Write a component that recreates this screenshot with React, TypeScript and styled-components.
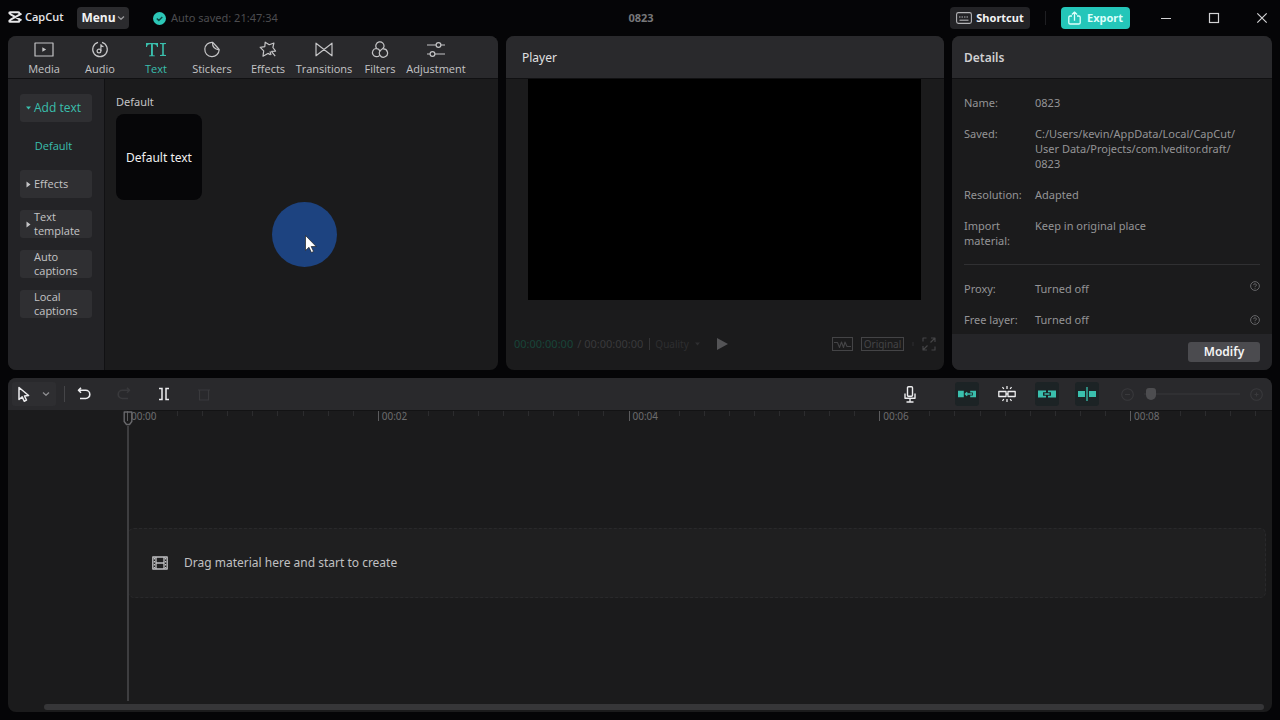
import React from "react";
import styled, { createGlobalStyle } from "styled-components";

const teal = "#3abfad";

const GlobalStyle = createGlobalStyle`
  * { box-sizing: border-box; }
  body {
    margin: 0;
    background: #050507;
    color: #c4c4c6;
    font: 12px/16px "Noto Sans", "Open Sans", sans-serif;
  }
  button {
    font: inherit;
    color: inherit;
    background: none;
    border: 0;
    padding: 0;
    display: flex;
    align-items: center;
    justify-content: center;
  }
  svg { display: block; flex: none; }
`;

const Window = styled.div`
  min-height: 100vh;
  display: flex;
  flex-direction: column;
  position: relative;
`;

/* Title bar */
const TitleBar = styled.header`
  height: 36px;
  display: grid;
  grid-template-columns: 1fr auto 1fr;
  align-items: center;
  padding: 0 6px 0 8px;
`;
const TitleLeft = styled.div`
  display: flex;
  align-items: center;
`;
const TitleRight = styled.div`
  display: flex;
  align-items: center;
  justify-content: flex-end;
`;
const Logo = styled.div`
  display: flex;
  align-items: center;
  gap: 3px;
  width: 69px;
  padding-bottom: 2px;
  color: #e6e6e8;
  font: 600 11px/16px "Open Sans", sans-serif;
`;
const MenuButton = styled.button`
  && {
    width: 52px;
    height: 22px;
    border-radius: 4px;
    background: #2b2b2e;
    color: #f2f2f3;
    font: 700 12px/16px "Open Sans", sans-serif;
    gap: 1px;
  }
  svg { color: #98989b; }
`;
const SavedNote = styled.div`
  display: flex;
  align-items: center;
  gap: 5px;
  margin-left: 24px;
  color: #4c4c4f;
  font-size: 11px;
`;
const ProjectTitle = styled.h1`
  margin: 0;
  color: #77777a;
  font-size: 11px;
  line-height: 16px;
`;
const ShortcutButton = styled.button`
  && {
    height: 22px;
    width: 80px;
    gap: 4px;
    border-radius: 4px;
    background: #232326;
    color: #f2f2f3;
    font-size: 11px;
    font-weight: 700;
  }
`;
const ExportButton = styled(ShortcutButton)`
  && {
    width: 69px;
    gap: 6px;
    background: #24c6b9;
    color: #dcfffb;
  }
`;
const BarDivider = styled.span`
  width: 1px;
  height: 14px;
  margin: 0 15px;
  background: #1f1f22;
`;
const WindowButtons = styled.div`
  display: flex;
  gap: 24px;
  margin-left: 24px;
  color: #d2d2d4;
  button { width: 24px; height: 24px; }
`;

/* Panels */
const Workspace = styled.main`
  flex: 1;
  display: grid;
  grid-template-rows: 1fr 1fr;
  gap: 8px;
  padding: 0 8px 8px;
`;
const TopRow = styled.div`
  display: grid;
  grid-template-columns: minmax(0, 490fr) minmax(0, 438fr) 320px;
  gap: 8px;
`;
const Panel = styled.section`
  display: flex;
  flex-direction: column;
  min-width: 0;
  background: #1b1b1c;
  border-radius: 8px;
  overflow: hidden;
`;
const PanelHead = styled.div`
  height: 43px;
  flex: none;
  display: flex;
  align-items: center;
  background: #29292c;
  border-bottom: 1px solid #101012;
`;
const PanelTitle = styled.h2<{ $strong?: boolean }>`
  margin: 0;
  padding: 2px ${(p) => (p.$strong ? 12 : 16)}px 0;
  color: ${(p) => (p.$strong ? "#d0d0d2" : "#e0e0e2")};
  font-size: 12px;
  line-height: 16px;
  font-weight: ${(p) => (p.$strong ? 600 : 400)};
`;

/* Library */
const Tabs = styled.nav`
  display: flex;
  padding-left: 8px;
`;
const Tab = styled.button<{ $active?: boolean }>`
  && {
    width: 56px;
    height: 42px;
    flex-direction: column;
    gap: 3px;
    padding-top: 4px;
    color: ${(p) => (p.$active ? teal : "#c4c4c6")};
    font: 11px/16px "Open Sans", sans-serif;
  }
`;
const LibraryBody = styled.div`
  flex: 1;
  display: flex;
`;
const SideList = styled.div`
  width: 97px;
  display: flex;
  flex-direction: column;
  gap: 12px;
  padding: 15px 12px;
  background: #232326;
  border-right: 1px solid #111113;
`;
const SideButton = styled.button<{ $active?: boolean }>`
  && {
    width: 72px;
    height: 28px;
    justify-content: flex-start;
    border-radius: 3px;
    background: #2f2f32;
    color: ${(p) => (p.$active ? teal : "#c4c4c6")};
    font: ${(p) => (p.$active ? 12 : 11)}px/14px "Open Sans", sans-serif;
    text-align: left;
  }
`;
const Marker = styled.span`
  width: 14px;
  flex: none;
  display: flex;
  justify-content: center;
  padding-left: 2px;
`;
const SubButton = styled.button`
  && {
    width: 67px;
    height: 24px;
    color: ${teal};
    font: 11px/16px "Open Sans", sans-serif;
  }
`;
const Assets = styled.div`
  flex: 1;
  padding: 15px 11px;
`;
const AssetHeading = styled.h3`
  margin: 0 0 4px;
  font-size: 11px;
  line-height: 16px;
  font-weight: 400;
`;
const AssetCard = styled.button`
  && {
    width: 86px;
    height: 86px;
    padding-top: 2px;
    border-radius: 8px;
    background: #060608;
    color: #f0f0f1;
  }
`;

/* Player */
const Stage = styled.div`
  margin: 0 23px 0 22px;
  aspect-ratio: 16 / 9;
  background: #000;
`;
const PlayerBar = styled.div`
  height: 53px;
  margin-top: auto;
  display: flex;
  align-items: center;
  padding: 0 8px;
  color: #39393b;
  font-size: 11px;
  button { color: #444446; }
`;
const TimeNow = styled.span`
  color: #184439;
`;
const TimeTotal = styled.span`
  margin-left: 4px;
`;
const Quality = styled.button`
  && {
    gap: 6px;
    margin: 0 17px 0 6px;
    padding-left: 5px;
    border-left: 1px solid #343436;
    color: #2e2e30;
    font-size: 10px;
    line-height: 12px;
  }
`;
const PlayerTools = styled.div`
  display: flex;
  align-items: center;
  gap: 8px;
  margin-left: auto;
`;
const RatioButton = styled.button`
  && {
    width: 43px;
    height: 14px;
    border: 1px solid #444446;
    font-size: 10px;
    line-height: 12px;
  }
`;
const Dot = styled.span`
  width: 2px;
  height: 4px;
  background: #242426;
`;

/* Details */
const Facts = styled.dl`
  margin: 0;
  padding: 16px 12px 0;
  display: grid;
  grid-template-columns: 63px 1fr auto;
  gap: 16px 8px;
  color: #949496;
  font-size: 11px;
  line-height: 15px;
  dt, dd { margin: 0; }
  dd:not(:has(+ button)) { grid-column: 2 / 4; }
`;
const HelpButton = styled.button<{ $top?: boolean }>`
  && {
    align-self: ${(p) => (p.$top ? "start" : "center")};
    color: #6e6e70;
  }
`;
const Rule = styled.hr`
  width: 296px;
  height: 1px;
  margin: 0;
  border: 0;
  background: #303032;
  grid-column: 1 / 4;
`;
const DetailsFoot = styled.div`
  height: 36px;
  margin-top: auto;
  display: flex;
  align-items: center;
  justify-content: flex-end;
  padding: 0 12px;
  background: #252528;
`;
const ModifyButton = styled.button`
  && {
    width: 72px;
    height: 20px;
    border-radius: 3px;
    background: #4b4b4f;
    color: #f4f4f5;
    font-size: 12px;
    font-weight: 600;
  }
`;

/* Timeline */
const Timeline = styled(Panel)`
  position: relative;
`;
const ToolRow = styled.div`
  height: 32px;
  flex: none;
  display: flex;
  align-items: center;
  gap: 16px;
  padding: 0 4px;
  background: #29292c;
  color: #ececee;
`;
const SelectGroup = styled.div`
  display: flex;
  height: 24px;
  background: #2e2e31;
  border-radius: 3px;
`;
const ToolButton = styled.button<{ $on?: boolean; $dim?: boolean }>`
  && {
    width: 24px;
    height: 24px;
    border-radius: 3px;
    background: ${(p) => (p.$on ? "#1c2325" : "transparent")};
    color: ${(p) => (p.$on ? teal : p.$dim ? "#39393c" : "#ececee")};
  }
`;
const SelectOptions = styled(ToolButton)`
  && {
    width: 20px;
    color: #8c8c8f;
  }
`;
const ToolDivider = styled.span`
  width: 1px;
  height: 16px;
  margin: 0 -9px 0 -8px;
  background: #454548;
`;
const ToolsRight = styled.div`
  display: flex;
  align-items: center;
  gap: 16px;
  margin-left: auto;
`;
const MicSlot = styled.div`
  margin-right: 17px;
`;
const ZoomGroup = styled.div`
  display: flex;
  align-items: center;
`;
const ZoomRange = styled.input`
  appearance: none;
  width: 96px;
  height: 12px;
  margin: 0 4px 0 5px;
  background: linear-gradient(#303033, #303033) center / 100% 2px no-repeat;
  &::-webkit-slider-thumb {
    appearance: none;
    width: 10px;
    height: 12px;
    border-radius: 3px 3px 5px 5px;
    background: #4d4d50;
  }
`;
const Ruler = styled.div`
  height: 12px;
  flex: none;
  display: flex;
  margin-left: 119px;
  border-top: 1px solid #131314;
`;
const Span = styled.div`
  flex: 0 0 21.9%;
  display: grid;
  grid-template-columns: repeat(10, 1fr);
  position: relative;
`;
const Tick = styled.i<{ $major?: boolean }>`
  height: ${(p) => (p.$major ? 10 : 5)}px;
  border-left: 1px solid ${(p) => (p.$major ? "#5c5c5e" : "#2c2c2e")};
`;
const TickLabel = styled.span`
  position: absolute;
  left: 4px;
  top: -1px;
  color: #6c6c6e;
  font-size: 10px;
  line-height: 12px;
`;
const Tracks = styled.div`
  flex: 1;
  display: flex;
  align-items: center;
  padding: 0 6px 0 120px;
`;
const DropZone = styled.div`
  flex: 1;
  height: 70px;
  display: flex;
  align-items: center;
  gap: 16px;
  padding-left: 23px;
  border: 1px dashed #29292b;
  border-radius: 6px;
  background: #1f1f20;
  color: #c0c0c2;
`;
const ScrollTrack = styled.div`
  height: 9px;
  flex: none;
  padding: 1px 8px 2px 36px;
`;
const ScrollThumb = styled.div`
  height: 6px;
  border-radius: 3px;
  background: #363638;
`;
const Playhead = styled.div`
  position: absolute;
  left: 115px;
  top: 33px;
  bottom: 11px;
  width: 10px;
  display: flex;
  flex-direction: column;
  align-items: center;
  &::after {
    content: "";
    flex: 1;
    width: 2px;
    background: #3e3e40;
  }
`;

const PointerHalo = styled.div`
  position: absolute;
  left: 272px;
  top: 202px;
  width: 65px;
  height: 65px;
  border-radius: 50%;
  background: #1d4380;
  pointer-events: none;
  svg { margin: 33px 0 0 33px; }
`;

type IconProps = { w?: number; h?: number; box?: string; sw?: number; children: React.ReactNode };
const Icon = ({ w = 20, h = 20, box, sw = 1.3, children }: IconProps) => (
  <svg
    width={w}
    height={h}
    viewBox={box ?? `0 0 ${w} ${h}`}
    fill="none"
    stroke="currentColor"
    strokeWidth={sw}
    strokeLinejoin="round"
    aria-hidden="true"
  >
    {children}
  </svg>
);

const Chevron = () => (
  <Icon w={8} h={6} sw={1.3}><path d="M1 1.5 4 4.3 7 1.5" /></Icon>
);
const Help = () => (
  <Icon w={10} h={10} sw={0.9}>
    <circle cx="5" cy="5" r="4.4" />
    <path d="M3.7 4.1a1.3 1.3 0 1 1 1.9 1.1c-.5.3-.6.4-.6.9M5 6.9v.8" />
  </Icon>
);

const tabs = [
  { name: "Media", icon: <><rect x="1" y="2" width="18" height="13" /><path d="M8.3 6.2v4.6l3.9-2.3z" fill="currentColor" stroke="none" /></> },
  { name: "Audio", icon: <><path d="M12 1.4a7.3 7.3 0 1 1-4 0" /><circle cx="9" cy="10" r="1.9" /><path d="M10.9 10V3.6c.3 1.2 1.2 1.9 2.6 2" /></> },
  { name: "Text", icon: <g fill="currentColor" stroke="none"><path d="M0 2h12v4h-1C10.7 4 10 3.2 8 3.2H6.900v10.200c0 .7.500.9 2 1v.8H3v-.8c1.500-.1 2-.3 2-1V3.200H4C2 3.200 1.300 4 1 6H0z" /><path d="M14 2h6v1l-2.200.3v10.500l2.200.3v1h-6v-1l2.200-.3V3.300L14 3z" /></g> },
  { name: "Stickers", icon: <><path d="M10.5 1.300a7.200 7.200 0 1 0 6.700 7.500c-.1-.8-5.900-6.900-6.700-7.500z" /><path d="M10.500 1.300c-.2 4.200 2 7 6.700 7.500" /></> },
  { name: "Effects", icon: <><path d="M12.300 13.600 9.900 12.400 5 15.200l.7-5.300L2.200 6.300l4.600-.7L7.200 1.200l4 2.500 4.700-1.700-1 4.500 2.700 3.600-4.200.2" /><path d="m12 10.300 1 3.800M13.400 10.300l3.800 4.900" /></> },
  { name: "Transitions", icon: <path d="M2 2.200v12.600l16-12.600v12.600z" /> },
  { name: "Filters", icon: <><path d="M6.600 7.400a4.100 4.100 0 1 1 7.300-1.500c-.5 2.400-3.700 2.500-4.500 4.700" /><path d="M13 8a4.100 4.100 0 1 1-3 6.300C9 12.700 9.300 11 10 10" /><path d="M9.600 14.300A4.100 4.100 0 1 1 6 7.500c2 0 3.600 1.200 4 3" /></> },
  { name: "Adjustment", icon: <><path d="M1 4h9M15 4h4M1 13h3M9 13h10" /><circle cx="12.500" cy="4" r="2.400" /><circle cx="6.500" cy="13" r="2.400" /></> },
];

const Right = () => <Icon w={5} h={7}><path d="M.5.5v6L4.5 3.5z" fill="currentColor" stroke="none" /></Icon>;
const Down = () => <Icon w={5} h={4}><path d="M0 .5h5L2.5 3.5z" fill="currentColor" stroke="none" /></Icon>;

const marks = ["00:00", "00:02", "00:04", "00:06", "00:08"];

function TopBar() {
  return (
    <TitleBar>
      <TitleLeft>
        <Logo>
          <Icon w={14} h={12} sw={2}>
            <path d="M13.500 2.600 2.600 8.700c-.9.500-1.300.7-1.300 1.200 0 .6.300.9.900.9h8.200c.6 0 .9-.3.900-.9v-.8M13.500 9.400 2.600 3.300C1.700 2.800 1.300 2.600 1.300 2.100c0-.6.300-.9.900-.9h8.200c.6 0 .9.3.9.9v.8" />
          </Icon>
          CapCut
        </Logo>
        <MenuButton type="button">Menu<Chevron /></MenuButton>
        <SavedNote>
          <Icon w={13} h={13} sw={1.4}>
            <circle cx="6.5" cy="6.5" r="6.5" fill="#2cc7b7" stroke="none" />
            <path d="m3.8 6.600 2 2 3.500-3.700" stroke="#0c4a45" />
          </Icon>
          Auto saved: 21:47:34
        </SavedNote>
      </TitleLeft>
      <ProjectTitle>0823</ProjectTitle>
      <TitleRight>
        <ShortcutButton type="button">
          <Icon w={16} h={12} sw={1.1}>
            <g stroke="#b4b4b7">
              <rect x=".6" y=".6" width="14.8" height="10.8" rx="1.8" />
              <path d="M3 5h10" strokeDasharray="1.5 1" />
              <path d="M3.500 8.200h9" />
            </g>
          </Icon>
          Shortcut
        </ShortcutButton>
        <BarDivider />
        <ExportButton type="button">
          <Icon w={13} h={14} sw={1.3}>
            <path d="M4 5H2.2C1.3 5 .8 5.5.8 6.300v5.400c0 .8.500 1.300 1.400 1.300h8.600c.9 0 1.400-.5 1.400-1.300V6.300c0-.8-.5-1.300-1.400-1.300H9M6.500 9.800V1.200M3.900 3.500l2.600-2.400 2.600 2.400" />
          </Icon>
          Export
        </ExportButton>
        <WindowButtons>
          <button type="button" aria-label="Minimize"><Icon w={12} h={12} sw={1}><path d="M1 6.5h10" /></Icon></button>
          <button type="button" aria-label="Maximize"><Icon w={12} h={12} sw={1.2}><rect x="1.5" y="1.5" width="9" height="9" strokeLinejoin="miter" /></Icon></button>
          <button type="button" aria-label="Close"><Icon w={12} h={12} sw={1.2}><path d="m1.3 1.3 9.4 9.4M10.7 1.3l-9.400 9.400" /></Icon></button>
        </WindowButtons>
      </TitleRight>
    </TitleBar>
  );
}

function Library() {
  return (
    <Panel>
      <PanelHead as={Tabs}>
        {tabs.map((t) => (
          <Tab key={t.name} type="button" $active={t.name === "Text"}>
            <Icon w={20} h={17} sw={1.2}>{t.icon}</Icon>
            {t.name}
          </Tab>
        ))}
      </PanelHead>
      <LibraryBody>
        <SideList>
          <SideButton type="button" $active><Marker><Down /></Marker>Add text</SideButton>
          <SubButton type="button">Default</SubButton>
          <SideButton type="button"><Marker><Right /></Marker>Effects</SideButton>
          <SideButton type="button"><Marker><Right /></Marker>Text template</SideButton>
          <SideButton type="button"><Marker />Auto captions</SideButton>
          <SideButton type="button"><Marker />Local captions</SideButton>
        </SideList>
        <Assets>
          <AssetHeading>Default</AssetHeading>
          <AssetCard type="button">Default text</AssetCard>
        </Assets>
      </LibraryBody>
    </Panel>
  );
}

function Player() {
  return (
    <Panel>
      <PanelHead><PanelTitle>Player</PanelTitle></PanelHead>
      <Stage />
      <PlayerBar>
        <TimeNow>00:00:00:00</TimeNow>
        <TimeTotal>/ 00:00:00:00</TimeTotal>
        <Quality type="button">Quality<Down /></Quality>
        <button type="button" aria-label="Play"><Icon w={11} h={12}><path d="M0 0v12l11-6z" fill="#545456" stroke="none" /></Icon></button>
        <PlayerTools>
          <button type="button" aria-label="Scopes">
            <Icon w={21} h={14} sw={1.1}><rect x=".5" y=".5" width="20" height="13" /><path d="M2 5.500h3.500l2 5 2-5.500 2 5.500 1.500-5.500 2 4.500h4" /></Icon>
          </button>
          <RatioButton type="button">Original</RatioButton>
          <Dot />
          <button type="button" aria-label="Full screen">
            <Icon w={14} h={14} sw={1.2}><path d="M1 4.500V1h3.500M9 1h4v4M13 9.500V13H9.500M5 13H1V9M13 1 8.500 5.500M1 13l4.500-4.500" /></Icon>
          </button>
        </PlayerTools>
      </PlayerBar>
    </Panel>
  );
}

function Details() {
  return (
    <Panel>
      <PanelHead><PanelTitle $strong>Details</PanelTitle></PanelHead>
      <Facts>
        <dt>Name:</dt><dd>0823</dd>
        <dt>Saved:</dt>
        <dd>C:/Users/kevin/AppData/Local/CapCut/<br />User Data/Projects/com.lveditor.draft/<br />0823</dd>
        <dt>Resolution:</dt><dd>Adapted</dd>
        <dt>Import material:</dt><dd>Keep in original place</dd>
        <Rule />
        <dt>Proxy:</dt><dd>Turned off</dd><HelpButton type="button" $top aria-label="About proxy"><Help /></HelpButton>
        <dt>Free layer:</dt><dd>Turned off</dd><HelpButton type="button" aria-label="About free layer"><Help /></HelpButton>
      </Facts>
      <DetailsFoot><ModifyButton type="button">Modify</ModifyButton></DetailsFoot>
    </Panel>
  );
}

function TimelinePanel() {
  return (
    <Timeline>
      <ToolRow>
        <SelectGroup>
          <ToolButton type="button" aria-label="Select"><Icon w={14} h={17} sw={1.5}><path d="M2 1.5v12l3.200-2.600 2 4.300 2.300-1.100-2-4.100 4.100-.5z" /></Icon></ToolButton>
          <SelectOptions type="button" aria-label="Select options"><Chevron /></SelectOptions>
        </SelectGroup>
        <ToolDivider />
        <ToolButton type="button" aria-label="Undo"><Icon w={14} h={14} sw={1.600}><path d="M4 .8 1.500 3.300 4 5.800M1.500 3.300h7.200a4.100 4.100 0 0 1 0 8.200H3" /></Icon></ToolButton>
        <ToolButton type="button" $dim aria-label="Redo"><Icon w={14} h={14} sw={1.600}><path d="M10 .8l2.500 2.500L10 5.800M12.500 3.300H5.300a4.100 4.100 0 0 0 0 8.200H11" /></Icon></ToolButton>
        <ToolButton type="button" aria-label="Split"><Icon w={12} h={14} sw={1.5}><path d="M1 1.5h3v11H1M11 1.5H8v11h3" strokeLinejoin="miter" /></Icon></ToolButton>
        <ToolButton type="button" $dim aria-label="Delete"><Icon w={12} h={13} sw={1.2}><path d="M0 2h12M1.500 2v10h9V2" /></Icon></ToolButton>
        <ToolsRight>
          <MicSlot>
            <ToolButton type="button" aria-label="Record"><Icon w={12} h={17} sw={1.4}><rect x="3.5" y=".8" width="5" height="9.4" rx="1" /><path d="M1 7.500v4.800h10V7.500M6 12.300V16M2.500 16h7" /></Icon></ToolButton>
          </MicSlot>
          <ToolButton type="button" $on aria-label="Main track magnet"><Icon w={18} h={8}><path d="M0 .8h5.800v6.400H0zM12.200.8H18v6.400h-5.800V5.500h2.600v-3h-2.600z" fill="currentColor" stroke="none" /><path d="M8 4h6M9.200 2.300 7.300 4l1.900 1.700" /></Icon></ToolButton>
          <ToolButton type="button" aria-label="Auto snapping"><Icon w={18} h={16} sw={1.3}><rect x=".8" y="5.5" width="7.200" height="5" /><rect x="10" y="5.5" width="7.200" height="5" /><path d="M9 0v3M9 13v3M4.500 1l1.300 2M13.500 1l-1.300 2M4.500 15l1.300-2M13.500 15l-1.300-2M8 8h2" /></Icon></ToolButton>
          <ToolButton type="button" $on aria-label="Linkage"><Icon w={18} h={8}><path d="M0 .5h8v1.700H5v3.600h3v1.700H0zM18 .5h-8v1.700h3v3.600h-3v1.700h8z" fill="currentColor" stroke="none" /><path d="M6.500 4h5" /></Icon></ToolButton>
          <ToolButton type="button" $on aria-label="Preview axis"><Icon w={18} h={14}><path d="M0 4h7v6H0zM11 4h7v6h-7z" fill="currentColor" stroke="none" /><path d="M9 0v14" /></Icon></ToolButton>
          <ZoomGroup>
            <ToolButton type="button" $dim aria-label="Zoom out"><Icon w={13} h={13} sw={1.1}><circle cx="6.5" cy="6.5" r="5.8" /><path d="M4 6.5h5" /></Icon></ToolButton>
            <ZoomRange type="range" min={0} max={100} defaultValue={2} aria-label="Timeline zoom" />
            <ToolButton type="button" $dim aria-label="Zoom in"><Icon w={13} h={13} sw={1.1}><circle cx="6.5" cy="6.5" r="5.8" /><path d="M4.500 6.500h4M6.500 4.500v4" /></Icon></ToolButton>
          </ZoomGroup>
        </ToolsRight>
      </ToolRow>
      <Ruler>
        {marks.map((m) => (
          <Span key={m}>
            {Array.from({ length: 10 }, (_, i) => <Tick key={i} $major={i === 0} />)}
            <TickLabel>{m}</TickLabel>
          </Span>
        ))}
      </Ruler>
      <Tracks>
        <DropZone>
          <Icon w={16} h={14} sw={1.3}><rect x=".8" y="1" width="14.4" height="12" /><path d="M4 1v12M12 1v12M4 7h8" /><path d="M2.400 2v10M13.600 2v10" strokeDasharray="1.500 1.500" /></Icon>
          Drag material here and start to create
        </DropZone>
      </Tracks>
      <ScrollTrack><ScrollThumb /></ScrollTrack>
      <Playhead>
        <Icon w={10} h={15} sw={1.4}><path d="M1.2 1h7.600v9.500L6.500 13.500h-3L1.200 10.500z" stroke="#67676a" /></Icon>
      </Playhead>
    </Timeline>
  );
}

export default function App() {
  return (
    <Window>
      <GlobalStyle />
      <TopBar />
      <Workspace>
        <TopRow>
          <Library />
          <Player />
          <Details />
        </TopRow>
        <TimelinePanel />
      </Workspace>
      <PointerHalo>
        <Icon w={12} h={18}><path d="M.5.5v15l3.500-3.200 2.400 5.200 2.200-1-2.400-5h5z" fill="#fff" stroke="#222" strokeWidth=".7" /></Icon>
      </PointerHalo>
    </Window>
  );
}
